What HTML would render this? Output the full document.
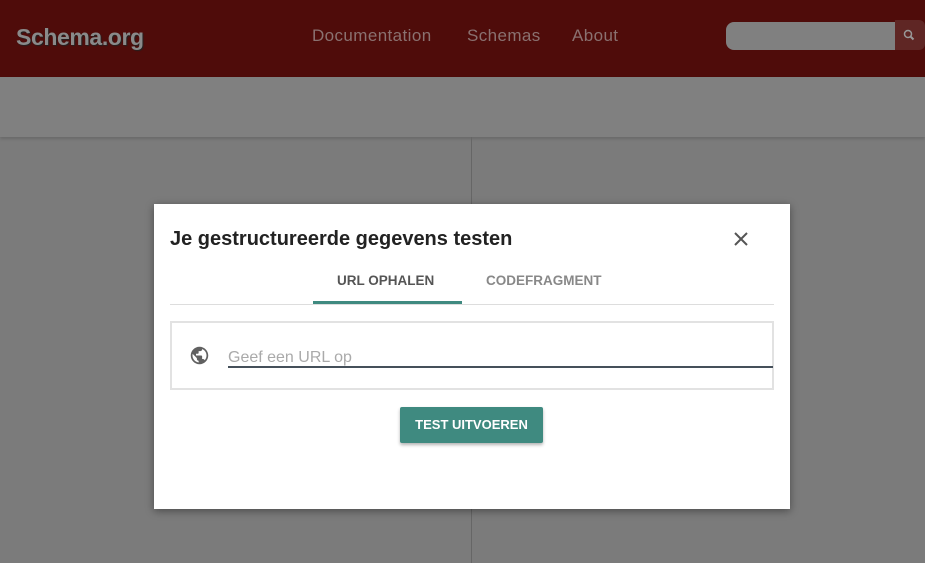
<!DOCTYPE html>
<html><head><style>
*{margin:0;padding:0;box-sizing:border-box}
body{width:925px;height:563px;overflow:hidden;background:#7b7b7b;font-family:"Liberation Sans",sans-serif;position:relative}
.hdr{position:absolute;left:0;top:0;width:925px;height:77px;background:#4f0c0a}
.logo{position:absolute;left:16px;top:24px;font-size:23px;font-weight:bold;color:#8a8a8a;letter-spacing:-0.4px;text-shadow:1px 1px 1px #222}
.nav{position:absolute;top:26px;font-size:17px;color:#8a7170;letter-spacing:0.4px}
.search{position:absolute;left:726px;top:22px;width:170px;height:28px;background:#808080;border-radius:8px 0 0 8px}
.sbtn{position:absolute;left:895px;top:20px;width:30px;height:30px;background:#5f2624;border-radius:0 6px 6px 0}
.band{position:absolute;left:0;top:77px;width:925px;height:60px;background:#808080;box-shadow:0 2px 3px rgba(0,0,0,.15)}
.vl{position:absolute;left:471px;top:137px;width:1px;height:426px;background:#666}
.dlg{position:absolute;left:154px;top:204px;width:636px;height:305px;background:#fff;box-shadow:0 2px 8px rgba(0,0,0,.4)}
.title{position:absolute;left:16px;top:24px;font-size:20px;font-weight:bold;color:#222}
.tab{position:absolute;top:69px;font-size:13.5px;font-weight:bold}
.ul{position:absolute;left:159px;top:97px;width:149px;height:3px;background:#3f8a80}
.sep{position:absolute;left:16px;top:100px;width:604px;height:1px;background:#ddd}
.box{position:absolute;left:16px;top:117px;width:604px;height:69px;border:2px solid #e2e2e2}
.inp{position:absolute;left:74px;top:145px;font-size:16px;color:#aaa}
.line{position:absolute;left:74px;top:162px;width:545px;height:2px;background:#45505a}
.btn{position:absolute;left:246px;top:203px;width:143px;height:36px;background:#3f8a80;color:#fff;font-size:13px;font-weight:bold;text-align:center;line-height:36px;border-radius:2px;box-shadow:0 2px 3px rgba(0,0,0,.3)}
</style></head><body>
<div class="hdr">
<div class="logo">Schema.org</div>
<div class="nav" style="left:312px">Documentation</div>
<div class="nav" style="left:467px">Schemas</div>
<div class="nav" style="left:572px">About</div>
<div class="search"></div>
<div class="sbtn"><svg width="30" height="30"><circle cx="13" cy="14" r="3.5" fill="none" stroke="#999" stroke-width="1.5"/><path d="M15.5 16.5l3 3" stroke="#999" stroke-width="2"/></svg></div>
</div>
<div class="band"></div>
<div class="vl"></div>
<div class="dlg">
<div class="title">Je gestructureerde gegevens testen</div>
<svg style="position:absolute;left:579px;top:27px" width="16" height="16"><path d="M2 2L14 14M14 2L2 14" stroke="#555" stroke-width="2"/></svg>
<div class="tab" style="left:183px;color:#555">URL OPHALEN</div>
<div class="tab" style="left:332px;color:#888">CODEFRAGMENT</div>
<div class="ul"></div>
<div class="sep"></div>
<div class="box"></div>
<svg style="position:absolute;left:35px;top:141px" width="21" height="21" viewBox="0 0 24 24"><path fill="#616161" d="M12 2C6.48 2 2 6.48 2 12s4.480 10 10 10 10-4.48 10-10S17.52 2 12 2zm-1 17.930c-3.950-.49-7-3.850-7-7.930 0-.62.080-1.210.21-1.790L9 15v1c0 1.100.9 2 2 2v1.930zm6.900-2.540c-.26-.81-1-1.390-1.900-1.390h-1v-3c0-.55-.45-1-1-1H8v-2h2c.55 0 1-.45 1-1V7h2c1.100 0 2-.9 2-2v-.41c2.930 1.190 5 4.060 5 7.410 0 2.080-.8 3.970-2.100 5.390z"/></svg>
<div class="inp">Geef een URL op</div>
<div class="line"></div>
<div class="btn">TEST UITVOEREN</div>
</div>
</body></html>
